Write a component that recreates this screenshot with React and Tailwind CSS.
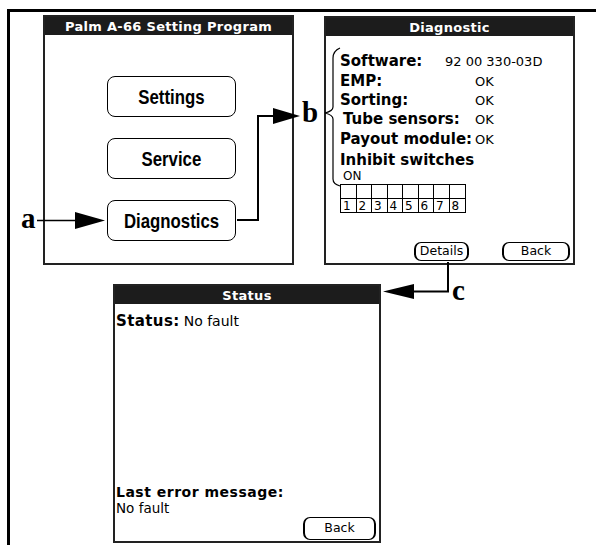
const palm = "font-['DejaVu_Sans',sans-serif]";
const arial = "font-['Liberation_Sans',sans-serif]";

function Screen({ title, className, children }) {
  return (
    <div className={`flex flex-col border-2 border-[#222] bg-white ${className}`}>
      <div className={`flex h-[18px] shrink-0 items-center justify-center bg-[#1c1c1c] text-[13px] font-bold leading-none tracking-[0.3px] text-white ${palm}`}>
        {title}
      </div>
      {children}
    </div>
  );
}

function PalmButton({ children, className }) {
  return (
    <div className={`flex items-center justify-center rounded-[7px] border-x-[2.5px] border-y-[1.5px] border-black bg-white text-[12.5px] leading-none text-black ${palm} ${className}`}>
      {children}
    </div>
  );
}

function Row({ label, value, labelW, indent }) {
  return (
    <div className="flex h-[19.4px] items-center">
      <div className={`text-[15px] font-bold leading-none ${labelW} ${indent ? "pl-[3px]" : ""}`}>{label}</div>
      <div className="text-[13px] leading-none">{value}</div>
    </div>
  );
}

export default function App() {
  return (
    <div className="relative h-[545px] w-[596px] overflow-hidden bg-white text-black">
      <div className="ml-[7px] mt-[9px] h-[536px] border-l-[3px] border-t-[3px] border-black pl-[33px] pt-[3px]">
        <div className="flex items-start gap-[30px]">
          {/* main menu */}
          <Screen title="Palm A-66 Setting Program" className="h-[250px] w-[251px]">
            <div className="flex flex-col gap-[21px] pl-[62px] pt-[41px]">
              {["Settings", "Service", "Diagnostics"].map((b) => (
                <div
                  key={b}
                  className={`flex h-[41px] w-[129px] items-center justify-center rounded-[8px] border-[1.5px] border-black text-[21px] font-bold leading-none ${arial}`}
                >
                  <span className="inline-block scale-x-[0.8]">{b}</span>
                </div>
              ))}
            </div>
          </Screen>

          {/* diagnostic */}
          <Screen title="Diagnostic" className={`mt-[1px] h-[249px] w-[251px] ${palm}`}>
            <div className="flex flex-1 flex-col pl-[14px] pt-[16px]">
              <Row label="Software:" value="92 00 330-03D" labelW="w-[105px]" />
              <Row label="EMP:" value="OK" labelW="w-[135px]" />
              <Row label="Sorting:" value="OK" labelW="w-[135px]" />
              <Row label="Tube sensors:" value="OK" labelW="w-[135px]" indent />
              <Row label="Payout module:" value="OK" labelW="w-[135px]" />
              <div className="mt-[2px] flex h-[19px] items-center text-[15px] font-bold leading-none">Inhibit switches</div>
              <div className="pl-[3px] text-[12px] leading-[12px]">ON</div>
              <div className="mt-[2px] grid w-[126px] grid-cols-8 border border-black">
                {[1, 2, 3, 4, 5, 6, 7, 8].map((n) => (
                  <div key={"t" + n} className="h-[14px] border-b border-black [&:not(:nth-child(8))]:border-r" />
                ))}
                {[1, 2, 3, 4, 5, 6, 7, 8].map((n) => (
                  <div
                    key={n}
                    className="flex h-[13px] items-end pl-[2px] text-[12px] leading-none [&:not(:last-child)]:border-r border-black"
                  >
                    {n}
                  </div>
                ))}
              </div>
              <div className="mb-[2px] mt-auto flex justify-end gap-[33px] pr-[3px]">
                <PalmButton className="h-[19px] w-[55px]">Details</PalmButton>
                <PalmButton className="h-[19px] w-[68px]">Back</PalmButton>
              </div>
            </div>
          </Screen>
        </div>

        {/* status */}
        <Screen title="Status" className={`ml-[70px] mt-[19px] h-[259px] w-[268px] ${palm}`}>
          <div className="flex flex-1 flex-col">
            <div className="mt-[10px] flex items-baseline pl-[1px] leading-none">
              <span className="text-[15px] font-bold tracking-[0.4px]">Status:</span>
              <span className="ml-[4px] text-[14px]">No fault</span>
            </div>
            <div className="mt-auto pl-[1px] text-[14px] font-bold leading-[16px] tracking-[0.5px]">Last error message:</div>
            <div className="pl-[1px] text-[13.5px] leading-[16px]">No fault</div>
            <div className="mb-[1px] mt-[1px] flex justify-end pr-[3px]">
              <PalmButton className="h-[23px] w-[73px]">Back</PalmButton>
            </div>
          </div>
        </Screen>
      </div>

      {/* callouts */}
      <svg className="pointer-events-none absolute inset-0" width="596" height="545" viewBox="0 0 596 545">
        <g fill="#000" stroke="none">
          <polygon points="75,212 105,220.5 75,229" />
          <polygon points="273,108 300,116 273,124" />
          <polygon points="414,284 383,291.5 414,299" />
        </g>
        <g fill="none" stroke="#000" strokeWidth="1.5">
          <line x1="37" y1="220.5" x2="78" y2="220.5" />
          <polyline strokeWidth="2" points="237,220 258,220 258,116 275,116" />
          <polyline strokeWidth="2" points="448,262 448,291.5 412,291.5" />
          <path strokeWidth="1.2" d="M340,48 Q333,51 333,58 L333,107 Q333,111 325,113 Q333,115 333,119 L333,179 Q333,184 340,186" />
        </g>
        <g fill="#000" fontFamily="'Liberation Serif', serif" fontWeight="bold" fontSize="29">
          <text x="21" y="228">a</text>
          <text x="302" y="122">b</text>
          <text x="452" y="300">c</text>
        </g>
      </svg>
    </div>
  );
}
